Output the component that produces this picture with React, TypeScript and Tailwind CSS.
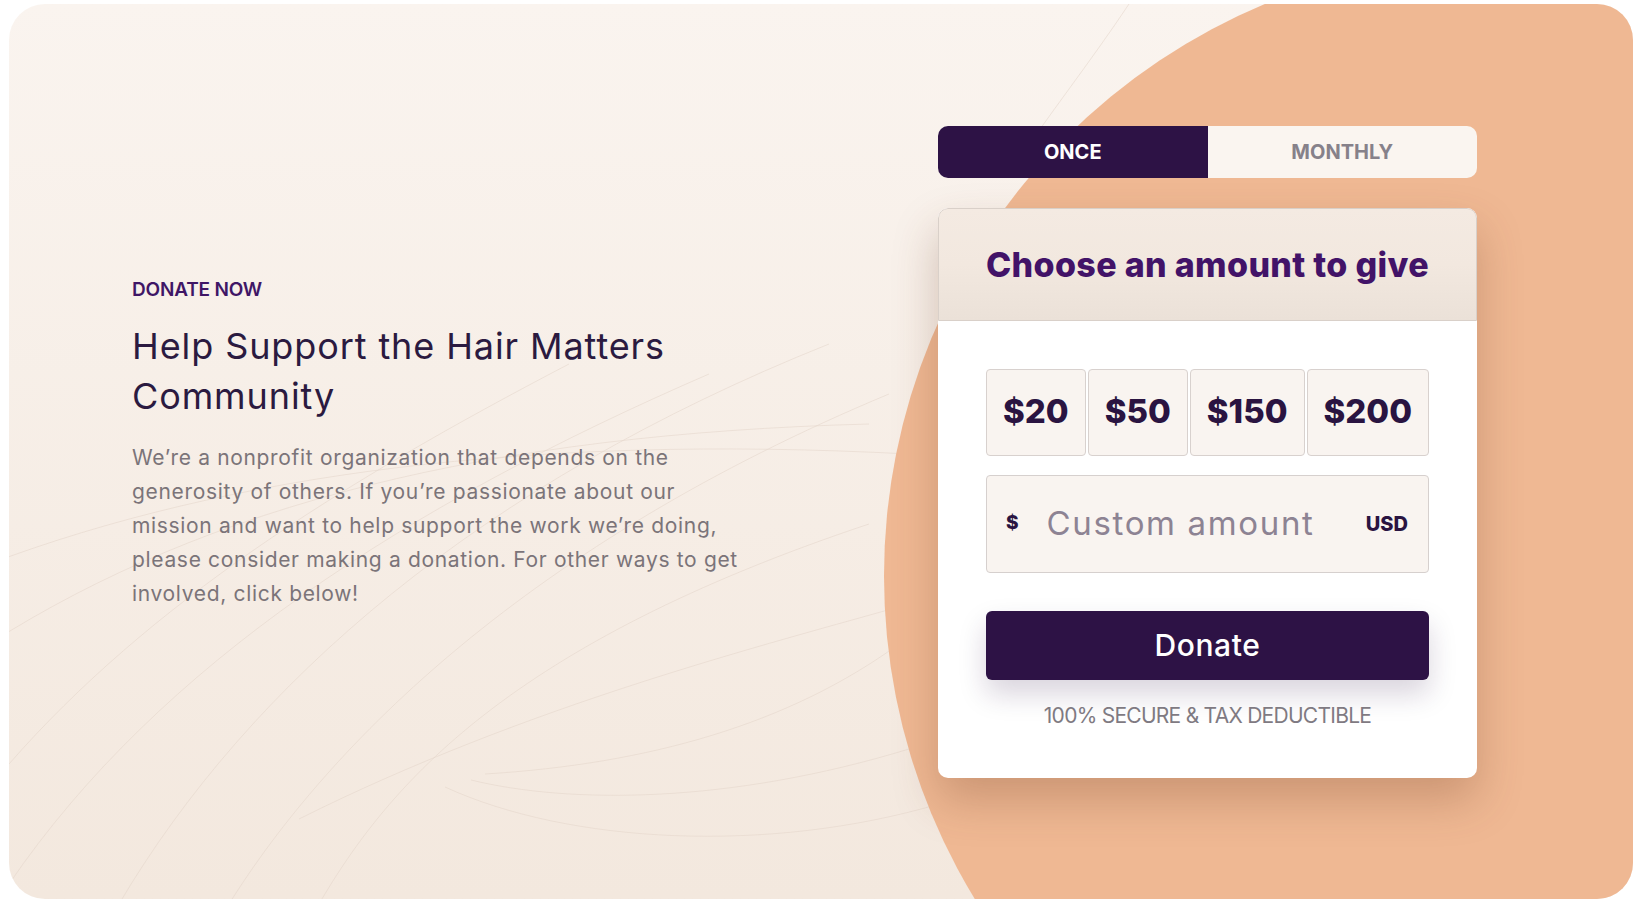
import React, { useState } from 'react';

const amounts = ['$20', '$50', '$150', '$200'];

// faint swooping lines behind the left column (panel coordinates)
const swirls = [
  'M -20 640 C 200 500, 480 430, 860 420',
  'M -20 560 C 220 470, 520 430, 900 450',
  'M 0 760 C 140 600, 330 480, 560 360',
  'M 0 880 C 150 660, 400 500, 700 370',
  'M 110 900 C 240 680, 470 480, 820 340',
  'M 220 900 C 320 740, 520 540, 880 390',
  'M 310 900 C 380 780, 500 640, 860 520',
  'M 290 815 C 520 700, 760 640, 900 600',
  'M 476 770 C 640 760, 780 720, 890 640',
  'M 436 783 C 560 840, 760 850, 930 800',
  'M 462 776 C 560 800, 720 800, 900 745',
  'M 1120 0 C 1080 60, 1040 110, 1000 170',
];

const blurb = [
  'We’re a nonprofit organization that depends on the',
  'generosity of others. If you’re passionate about our',
  'mission and want to help support the work we’re doing,',
  'please consider making a donation. For other ways to get',
  'involved, click below!',
];

export default function App() {
  const [freq, setFreq] = useState<'once' | 'monthly'>('once');
  const [amount, setAmount] = useState('');

  return (
    <div className="min-h-screen bg-white pt-[4px] pl-[9px] pr-[10px] pb-[11px] font-['Inter',sans-serif]">
      <div className="relative flex h-[895px] items-center justify-between overflow-hidden rounded-[36px] bg-gradient-to-b from-[#faf4ef] to-[#f3e8de] pl-[123px] pr-[156px]">
        <svg className="absolute inset-0 h-full w-full" viewBox="0 0 1624 895" fill="none">
          {swirls.map((d, i) => (
            <path key={i} d={d} stroke="#e3d6cb" strokeWidth="1" opacity="0.55" />
          ))}
        </svg>
        <div className="absolute left-[875px] top-[-48px] h-[1240px] w-[1240px] rounded-full bg-[#efb893]" />

        {/* left copy */}
        <div className="relative mb-[16px] w-[620px]">
          <p className="text-[19px] leading-[27px] font-semibold tracking-[-0.01em] text-[#3f1666]">DONATE NOW</p>
          <h1 className="mt-[18px] text-[36px] leading-[50px] font-normal tracking-[0.025em] text-[#2b1a40]">
            Help Support the Hair Matters Community
          </h1>
          <p className="mt-5 whitespace-nowrap text-[21px] leading-[34px] tracking-[0.032em] text-[#7b7479]">
            {blurb.map((line, i) => (
              <React.Fragment key={i}>
                {line}
                {i < blurb.length - 1 && <br />}
              </React.Fragment>
            ))}
          </p>
        </div>

        {/* donation widget */}
        <div className="relative w-[539px]">
          <div className="flex h-[52px] overflow-hidden rounded-[10px] bg-[#faf5f0]">
            <button
              onClick={() => setFreq('once')}
              className={`flex-1 text-[20px] font-bold ${freq === 'once' ? 'bg-[#2d1245] text-white' : 'text-[#86818a]'}`}
            >
              ONCE
            </button>
            <button
              onClick={() => setFreq('monthly')}
              className={`flex-1 text-[20px] font-bold ${freq === 'monthly' ? 'bg-[#2d1245] text-white' : 'text-[#86818a]'}`}
            >
              MONTHLY
            </button>
          </div>

          <div className="mt-[30px] overflow-hidden rounded-[10px] bg-white shadow-[0_22px_45px_rgba(110,60,35,0.28)]">
            <div className="flex h-[113px] items-center justify-center rounded-t-[10px] border border-[#d9d0c9] bg-gradient-to-b from-[#f4eae2] via-[#f2e8df] to-[#ebe1d8]">
              <h2 className="text-[34px] font-extrabold tracking-[0.01em] text-[#421368]">Choose an amount to give</h2>
            </div>

            <div className="px-12 pt-12 pb-12">
              <div className="flex h-[87px] gap-[2px]">
                {amounts.map(a => (
                  <button
                    key={a}
                    onClick={() => setAmount(a.slice(1))}
                    className="min-w-0 flex-auto rounded-[4px] border border-[#d8d1ce] bg-[#f9f4f0] text-[33px] font-extrabold text-[#2a1441]"
                  >
                    {a}
                  </button>
                ))}
              </div>

              <div className="mt-[19px] flex h-[98px] items-center rounded-[4px] border border-[#d6d0ce] bg-[#f9f4f0] pl-[19px] pr-[20px]">
                <span className="text-[19px] font-extrabold text-[#2a1441]">$</span>
                <input
                  value={amount}
                  onChange={e => setAmount(e.target.value)}
                  placeholder="Custom amount"
                  className="ml-[28px] min-w-0 flex-1 bg-transparent text-[33px] tracking-[0.05em] text-[#2a1441] outline-none placeholder:text-[#8d8393]"
                />
                <span className="text-[20px] font-extrabold text-[#2a1441]">USD</span>
              </div>

              <button className="mt-[38px] h-[69px] w-full rounded-[6px] bg-[#2d1245] text-[30px] font-medium tracking-[0.02em] text-white shadow-[0_14px_28px_rgba(45,18,69,0.18)]">
                Donate
              </button>

              <p className="mt-[22px] text-center text-[21px] leading-[28px] tracking-[-0.035em] text-[#7f7a82]">
                100% SECURE &amp; TAX DEDUCTIBLE
              </p>
            </div>
          </div>
        </div>
      </div>
    </div>
  );
}
